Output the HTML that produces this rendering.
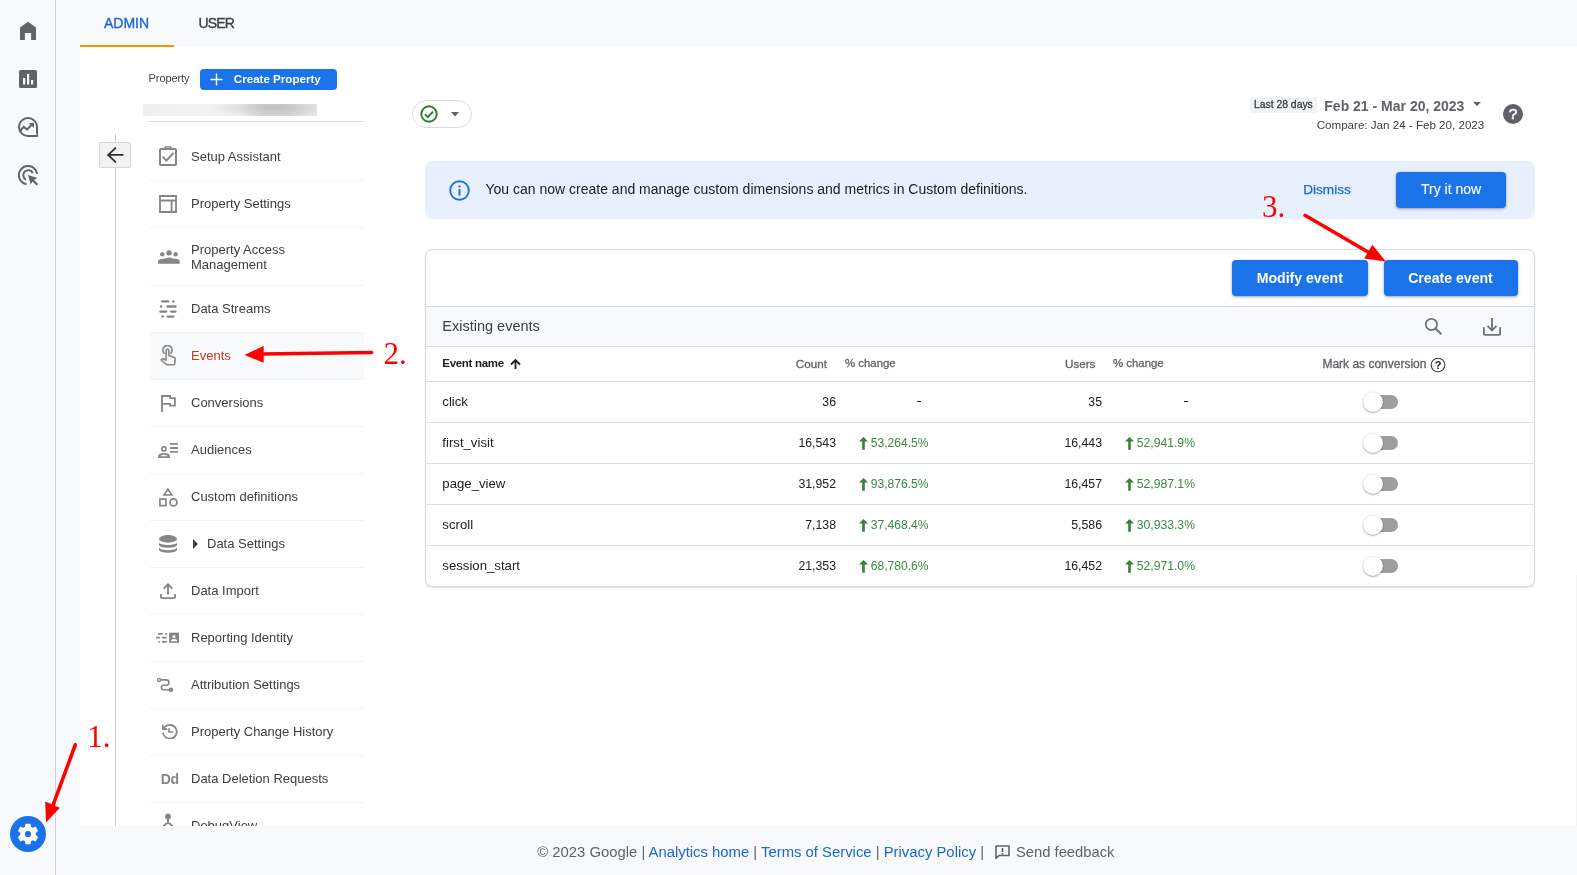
<!DOCTYPE html>
<html><head><meta charset="utf-8">
<style>
*{margin:0;padding:0;box-sizing:border-box}
html,body{width:1577px;height:875px;overflow:hidden;background:#f8f9fa;font-family:"Liberation Sans",sans-serif;color:#3c4043}
.a{position:absolute;display:block}
.t{position:absolute;white-space:nowrap;line-height:1}
body{-webkit-font-smoothing:antialiased}
</style></head><body><div style="position:absolute;left:0;top:0;width:1577px;height:875px;overflow:hidden;will-change:transform">
<div class="a" style="left:55px;top:0;width:1px;height:875px;background:#d3d3d3"></div>
<svg class="a" style="left:20px;top:21px;" width="16" height="19" viewBox="0 0 16 19"><path d="M8 0.7 L16 6.6 V19 H11.1 V12.1 H4.9 V19 H0 V6.6 Z" fill="#5f6368"/></svg>
<svg class="a" style="left:19px;top:70px;" width="18" height="18" viewBox="0 0 18 18"><rect x="0" y="0" width="18" height="18" rx="1.5" fill="#5f6368"/><rect x="4" y="8" width="2.2" height="6.5" fill="#f8f9fa"/><rect x="8" y="4" width="2.2" height="10.5" fill="#f8f9fa"/><rect x="12" y="10" width="2.2" height="4.5" fill="#f8f9fa"/></svg>
<svg class="a" style="left:18px;top:117px;" width="20" height="20" viewBox="0 0 20 20"><path d="M19 19 H10 A9 9 0 1 1 19 10 Z" fill="none" stroke="#5f6368" stroke-width="2" stroke-linejoin="round"/><path d="M2.3 13.9 L5.7 9.9 L9.1 12.5 L13.8 7.8" fill="none" stroke="#5f6368" stroke-width="2"/><path d="M10.9 5.9 H16 V11 Z" fill="#5f6368"/><circle cx="17.7" cy="17.1" r="0.9" fill="#f8f9fa"/></svg>
<svg class="a" style="left:18px;top:165px;" width="21" height="21" viewBox="0 0 21 21"><path d="M8.5 19.2 A9.2 9.2 0 1 1 19.2 9" fill="none" stroke="#5f6368" stroke-width="2"/><path d="M8 14.6 A5 5 0 1 1 14.8 8" fill="none" stroke="#5f6368" stroke-width="2"/><path d="M10 10 L19.5 13 L16 15 L20 19 L18.5 20.5 L14.5 16.5 L12.7 19.5 Z" fill="#5f6368"/></svg>
<svg class="a" style="left:10px;top:816px;" width="36" height="36" viewBox="0 0 36 36"><circle cx="18" cy="18" r="18" fill="#1a73e8"/><g transform="translate(5.1,5.1) scale(1.075)"><path fill="#fff" d="M19.14 12.94c.04-.3.06-.61.06-.94 0-.32-.02-.64-.07-.94l2.03-1.58a.49.49 0 0 0 .12-.61l-1.92-3.32a.488.488 0 0 0-.59-.22l-2.39.96c-.5-.38-1.03-.7-1.62-.94l-.36-2.54a.484.484 0 0 0-.48-.41h-3.84c-.24 0-.43.17-.47.41l-.36 2.54c-.59.24-1.13.57-1.62.94l-2.39-.96c-.22-.08-.47 0-.59.22L2.74 8.87c-.12.21-.08.47.12.61l2.03 1.58c-.05.3-.09.63-.09.94s.02.64.07.94l-2.03 1.58a.49.49 0 0 0-.12.61l1.92 3.32c.12.22.37.29.59.22l2.39-.96c.5.38 1.03.7 1.62.94l.36 2.54c.05.24.24.41.48.41h3.84c.24 0 .44-.17.47-.41l.36-2.54c.59-.24 1.13-.56 1.62-.94l2.39.96c.22.08.47 0 .59-.22l1.92-3.32c.12-.22.07-.47-.12-.61l-2.01-1.58zM12 15.6c-1.98 0-3.6-1.62-3.6-3.6s1.62-3.6 3.6-3.6 3.6 1.62 3.6 3.6-1.62 3.6-3.6 3.6z"/><circle cx="12" cy="12" r="4.2" fill="#fff"/><circle cx="12" cy="12" r="2.9" fill="#1a73e8"/></g></svg>
<div class="t" style="left:104px;top:16.35px;font-size:14px;color:#1967d2;font-weight:normal;font-family:'Liberation Sans',sans-serif;-webkit-text-stroke:0.35px #1967d2">ADMIN</div>
<div class="t" style="left:198.6px;top:16.35px;font-size:14px;color:#3c4043;font-weight:normal;font-family:'Liberation Sans',sans-serif;letter-spacing:-0.9px;-webkit-text-stroke:0.35px #3c4043">USER</div>
<div class="a" style="left:80px;top:45px;width:94px;height:2px;background:#f29900"></div>
<div class="a" style="left:80px;top:47px;width:1497px;height:779px;background:#fff;overflow:hidden">
<div class="t" style="left:68.6px;top:25.89px;font-size:11px;color:#3c4043;font-weight:normal;font-family:'Liberation Sans',sans-serif;letter-spacing:-0.1px">Property</div>
<div class="a" style="left:120px;top:22px;width:137px;height:21px;background:#1a73e8;border-radius:4px"></div>
<svg class="a" style="left:130px;top:26px;" width="13" height="13" viewBox="0 0 13 13"><path d="M6.5 0.5 V12.5 M0.5 6.5 H12.5" stroke="#fff" stroke-width="1.4"/></svg>
<div class="t" style="left:153.8px;top:26.38px;font-size:11.6px;color:#fff;font-weight:bold;font-family:'Liberation Sans',sans-serif;letter-spacing:0px">Create Property</div>
<div class="a" style="left:63px;top:57px;width:174px;height:12px;background:radial-gradient(ellipse 60px 9px at 73% 30%,rgba(0,0,0,.10),rgba(0,0,0,0) 100%),linear-gradient(90deg,#efefef 0%,#f3f3f3 35%,#ececec 55%,#d6d6d6 70%,#d4d4d4 82%,#e6e6e6 100%)"></div>
<div class="a" style="left:68px;top:74px;width:216px;height:1px;background:#dadce0"></div>
<div class="a" style="left:35px;top:87px;width:1px;height:700px;background:#cccccc"></div>
<div class="a" style="left:19px;top:95px;width:32px;height:26px;background:#f2f2f2;border:1px solid #d6d6d6;border-radius:2px"></div>
<svg class="a" style="left:24px;top:99px;" width="21" height="18" viewBox="0 0 21 18"><path d="M18.8 8.9 H4 M11.4 2.1 L4.2 8.9 L11.4 15.9" fill="none" stroke="#303030" stroke-width="1.9" stroke-linecap="round"/></svg>
<div class="a" style="left:70px;top:87px;width:214px;height:46px;"></div>
<div class="a" style="left:70px;top:133px;width:214px;height:1px;background:#f1f3f4"></div>
<div class="t" style="left:111px;top:102.70px;font-size:13px;color:#3c4043;font-weight:normal;font-family:'Liberation Sans',sans-serif;">Setup Assistant</div>
<svg class="a" style="left:79px;top:99px;" width="18" height="20" viewBox="0 0 18 20"><rect x="1" y="3" width="16" height="16" rx="1" fill="none" stroke="#868686" stroke-width="2"/><path d="M6 3 A3 2.6 0 0 1 12 3" fill="none" stroke="#868686" stroke-width="1.6"/><path d="M3.6 10.6 L7.4 14.6 L14.4 7" fill="none" stroke="#868686" stroke-width="2"/></svg>
<div class="a" style="left:70px;top:134px;width:214px;height:46px;"></div>
<div class="a" style="left:70px;top:180px;width:214px;height:1px;background:#f1f3f4"></div>
<div class="t" style="left:111px;top:149.70px;font-size:13px;color:#3c4043;font-weight:normal;font-family:'Liberation Sans',sans-serif;">Property Settings</div>
<svg class="a" style="left:79px;top:148px;" width="18" height="18" viewBox="0 0 18 18"><path d="M1 1 H17 V17 H1 Z M1 5.5 H17 M12.6 5.5 V17" fill="none" stroke="#868686" stroke-width="1.8"/></svg>
<div class="a" style="left:70px;top:181px;width:214px;height:57px;"></div>
<div class="a" style="left:70px;top:238px;width:214px;height:1px;background:#f1f3f4"></div>
<div class="a" style="left:111px;top:195px;font-size:13px;line-height:15.2px;color:#3c4043;white-space:nowrap">Property Access<br>Management</div>
<svg class="a" style="left:78px;top:203px;" width="22" height="14" viewBox="0 0 22 14"><circle cx="11" cy="2.9" r="2.7" fill="#868686"/><circle cx="4.3" cy="4.3" r="2.2" fill="#868686"/><circle cx="17.6" cy="4.3" r="2.2" fill="#868686"/><path d="M0.1 13.7 V10.8 Q0.3 9.2 3 8.9 Q6 8.7 7.5 8.6 Q11 6.6 14.5 8.6 Q16 8.7 19 8.9 Q21.5 9.2 21.7 10.8 V13.7 Z" fill="#868686"/></svg>
<div class="a" style="left:70px;top:239px;width:214px;height:46px;"></div>
<div class="a" style="left:70px;top:285px;width:214px;height:1px;background:#f1f3f4"></div>
<div class="t" style="left:111px;top:254.70px;font-size:13px;color:#3c4043;font-weight:normal;font-family:'Liberation Sans',sans-serif;">Data Streams</div>
<svg class="a" style="left:79px;top:253px;" width="19" height="19" viewBox="0 0 19 19"><g stroke="#868686" stroke-width="2.3" stroke-linecap="round"><path d="M3.2 1.4 H9.2 M8.4 6.5 H16.6 M1.3 11.6 H7.3 M12.1 11.6 H16.6 M8.7 16.6 H14.4"/></g><g fill="#868686"><circle cx="14.3" cy="1.4" r="1.25"/><circle cx="2.1" cy="6.5" r="1.25"/><circle cx="3.6" cy="16.6" r="1.25"/></g></svg>
<div class="a" style="left:70px;top:286px;width:214px;height:46px;background:#f8f9fa;"></div>
<div class="a" style="left:70px;top:332px;width:214px;height:1px;background:#f1f3f4"></div>
<div class="t" style="left:111px;top:301.70px;font-size:13px;color:#c5391f;font-weight:normal;font-family:'Liberation Sans',sans-serif;">Events</div>
<svg class="a" style="left:80px;top:298px;" width="17" height="21" viewBox="0 0 17 21"><path d="M4.6 8.6 A4.6 4.6 0 1 1 10.4 8.6" fill="none" stroke="#868686" stroke-width="1.6"/><path d="M6.1 15.2 V5.6 A1.4 1.4 0 0 1 8.9 5.6 V10.4 L14.3 12.6 Q15.4 13 15.3 14.1 L14.7 18.9 Q14.6 19.7 13.8 19.7 H6.7 L1.1 15 L2.7 13.5 Z" fill="none" stroke="#868686" stroke-width="1.6" stroke-linejoin="round"/></svg>
<div class="a" style="left:70px;top:333px;width:214px;height:46px;"></div>
<div class="a" style="left:70px;top:379px;width:214px;height:1px;background:#f1f3f4"></div>
<div class="t" style="left:111px;top:348.70px;font-size:13px;color:#3c4043;font-weight:normal;font-family:'Liberation Sans',sans-serif;">Conversions</div>
<svg class="a" style="left:81px;top:348px;" width="16" height="17" viewBox="0 0 16 17"><path d="M1 17 V1 H9 V3.1 H13.9 V10.7 H9 V8.9 H1" fill="none" stroke="#868686" stroke-width="1.8"/></svg>
<div class="a" style="left:70px;top:380px;width:214px;height:46px;"></div>
<div class="a" style="left:70px;top:426px;width:214px;height:1px;background:#f1f3f4"></div>
<div class="t" style="left:111px;top:395.70px;font-size:13px;color:#3c4043;font-weight:normal;font-family:'Liberation Sans',sans-serif;">Audiences</div>
<svg class="a" style="left:78px;top:395px;" width="20" height="16" viewBox="0 0 20 16"><circle cx="5.9" cy="6.9" r="2.05" fill="none" stroke="#868686" stroke-width="1.7"/><path fill-rule="evenodd" d="M0.1 15.9 V13.9 Q0.4 11 6 11 Q11.6 11 11.9 13.9 V15.9 Z M2.3 14.3 Q3 12.7 6 12.7 Q9 12.7 9.7 14.3 Z" fill="#868686"/><path d="M12.1 1.9 H19.9 M12.1 6 H19.9 M12.1 9.9 H19.9" stroke="#868686" stroke-width="1.9"/></svg>
<div class="a" style="left:70px;top:427px;width:214px;height:46px;"></div>
<div class="a" style="left:70px;top:473px;width:214px;height:1px;background:#f1f3f4"></div>
<div class="t" style="left:111px;top:442.70px;font-size:13px;color:#3c4043;font-weight:normal;font-family:'Liberation Sans',sans-serif;">Custom definitions</div>
<svg class="a" style="left:79px;top:440px;" width="19" height="20" viewBox="0 0 19 20"><path d="M8.95 2.2 L5.1 8 H12.8 Z" fill="none" stroke="#868686" stroke-width="1.7" stroke-linejoin="miter"/><rect x="0.95" y="12.05" width="6" height="6.6" fill="none" stroke="#868686" stroke-width="1.7"/><circle cx="14.5" cy="15.4" r="3.5" fill="none" stroke="#868686" stroke-width="1.7"/></svg>
<div class="a" style="left:70px;top:474px;width:214px;height:46px;"></div>
<div class="a" style="left:70px;top:520px;width:214px;height:1px;background:#f1f3f4"></div>
<div class="t" style="left:127px;top:489.70px;font-size:13px;color:#3c4043;font-weight:normal;font-family:'Liberation Sans',sans-serif;">Data Settings</div>
<svg class="a" style="left:112px;top:492px;" width="6" height="10" viewBox="0 0 6 10"><path d="M1 0 L6 5 L1 10 Z" fill="#3c4043"/></svg>
<svg class="a" style="left:79px;top:488px;" width="18" height="19" viewBox="0 0 18 19"><ellipse cx="9" cy="3.9" rx="9" ry="3.85" fill="#868686"/><path d="M0 7.4 A9 2.7 0 0 0 18 7.4 V10 A9 2.7 0 0 1 0 10 Z" fill="#868686"/><path d="M0 12.6 A9 2.7 0 0 0 18 12.6 V15 A9 2.7 0 0 1 0 15 Z" fill="#868686"/></svg>
<div class="a" style="left:70px;top:521px;width:214px;height:46px;"></div>
<div class="a" style="left:70px;top:567px;width:214px;height:1px;background:#f1f3f4"></div>
<div class="t" style="left:111px;top:536.70px;font-size:13px;color:#3c4043;font-weight:normal;font-family:'Liberation Sans',sans-serif;">Data Import</div>
<svg class="a" style="left:80px;top:536px;" width="16" height="16" viewBox="0 0 16 16"><path d="M8 1.2 V11.5 M3.6 5.6 L8 1.2 L12.4 5.6" fill="none" stroke="#868686" stroke-width="1.8"/><path d="M0.9 11 V14 Q0.9 15.1 2 15.1 H14 Q15.1 15.1 15.1 14 V11" fill="none" stroke="#868686" stroke-width="1.8"/></svg>
<div class="a" style="left:70px;top:568px;width:214px;height:46px;"></div>
<div class="a" style="left:70px;top:614px;width:214px;height:1px;background:#f1f3f4"></div>
<div class="t" style="left:111px;top:583.70px;font-size:13px;color:#3c4043;font-weight:normal;font-family:'Liberation Sans',sans-serif;">Reporting Identity</div>
<svg class="a" style="left:76px;top:585px;" width="23" height="12" viewBox="0 0 23 12"><g stroke="#868686" stroke-width="1.8"><path d="M2.2 1.8 H6.7 M9.2 1.8 H10.8 M0.1 5.7 H3.8 M5.9 5.7 H10.8 M2.2 9.8 H3.8 M5.9 9.8 H10.8"/></g><rect x="13.1" y="0.7" width="9.9" height="10.1" fill="#868686"/><circle cx="18" cy="4.5" r="1.6" fill="#fff"/><path d="M14.9 9.2 Q15 7 18 7 Q21 7 21.1 9.2 Z" fill="#fff"/></svg>
<div class="a" style="left:70px;top:615px;width:214px;height:46px;"></div>
<div class="a" style="left:70px;top:661px;width:214px;height:1px;background:#f1f3f4"></div>
<div class="t" style="left:111px;top:630.70px;font-size:13px;color:#3c4043;font-weight:normal;font-family:'Liberation Sans',sans-serif;">Attribution Settings</div>
<svg class="a" style="left:77px;top:630px;" width="17" height="16" viewBox="0 0 17 16"><circle cx="2" cy="2.9" r="1.55" fill="none" stroke="#868686" stroke-width="1.4"/><path d="M3.4 2.9 H9.3 A2.65 2.65 0 0 1 9.3 8.2 H6.6 A2.25 2.25 0 0 0 6.6 12.7 H13.9" fill="none" stroke="#868686" stroke-width="1.6"/><circle cx="13.9" cy="12.7" r="2.3" fill="#868686"/></svg>
<div class="a" style="left:70px;top:662px;width:214px;height:46px;"></div>
<div class="a" style="left:70px;top:708px;width:214px;height:1px;background:#f1f3f4"></div>
<div class="t" style="left:111px;top:677.70px;font-size:13px;color:#3c4043;font-weight:normal;font-family:'Liberation Sans',sans-serif;">Property Change History</div>
<svg class="a" style="left:82.30000000000001px;top:676.5px;" width="15.6" height="15.6" viewBox="120 -840 720 720"><path fill="#868686" d="M480-120q-138 0-240.5-91.5T122-440h82q14 104 92.5 172T480-200q117 0 198.5-81.5T760-480q0-117-81.5-198.5T480-760q-69 0-129 32t-101 88h110v80H120v-240h80v94q51-64 124.5-99T480-840q75 0 140.5 28.5t114 77q48.5 48.5 77 114T840-480q0 75-28.5 140.5t-77 114q-48.5 48.5-114 77T480-120Z"/><path d="M442 -640 V-470 H640" fill="none" stroke="#868686" stroke-width="75"/></svg>
<div class="a" style="left:70px;top:709px;width:214px;height:46px;"></div>
<div class="a" style="left:70px;top:755px;width:214px;height:1px;background:#f1f3f4"></div>
<div class="t" style="left:111px;top:724.70px;font-size:13px;color:#3c4043;font-weight:normal;font-family:'Liberation Sans',sans-serif;">Data Deletion Requests</div>
<div class="t" style="left:80.80000000000001px;top:725.15px;font-size:14px;color:#868686;font-weight:bold;font-family:'Liberation Sans',sans-serif;letter-spacing:-0.4px">Dd</div>
<div class="a" style="left:70px;top:756px;width:214px;height:46px;"></div>
<div class="a" style="left:70px;top:802px;width:214px;height:1px;background:#f1f3f4"></div>
<div class="t" style="left:111px;top:771.70px;font-size:13px;color:#3c4043;font-weight:normal;font-family:'Liberation Sans',sans-serif;">DebugView</div>
<svg class="a" style="left:83px;top:766px;" width="10" height="14" viewBox="0 0 10 14"><circle cx="5" cy="3.5" r="2.9" fill="#868686"/><path d="M5 5.5 V9" stroke="#868686" stroke-width="2"/><path d="M0.6 13.5 Q5 6.5 9.4 13.5" fill="none" stroke="#868686" stroke-width="2.2"/></svg>
<div class="a" style="left:332px;top:53px;width:60px;height:28px;border:1px solid #dadce0;border-radius:14px;background:#fff"></div>
<svg class="a" style="left:340px;top:58px;" width="18" height="18" viewBox="0 0 18 18"><circle cx="9" cy="9" r="7.7" fill="none" stroke="#2b7a2f" stroke-width="1.9"/><path d="M4.9 9.4 L7.7 12.1 L13.1 6.6" fill="none" stroke="#2b7a2f" stroke-width="2"/></svg>
<svg class="a" style="left:371px;top:65px;" width="8" height="5" viewBox="0 0 8 5"><path d="M0 0 H8 L4 4.5 Z" fill="#5f6368"/></svg>
<div class="a" style="left:1170px;top:50px;width:67px;height:16px;background:#f1f3f4"></div>
<div class="t" style="left:1173.9px;top:52.80px;font-size:10.4px;color:#3c4043;font-weight:normal;font-family:'Liberation Sans',sans-serif;-webkit-text-stroke:0.3px #3c4043">Last 28 days</div>
<div class="t" style="left:1244.3px;top:51.65px;font-size:14px;color:#5f6368;font-weight:bold;font-family:'Liberation Sans',sans-serif;">Feb 21 - Mar 20, 2023</div>
<svg class="a" style="left:1393px;top:55px;" width="8" height="4" viewBox="0 0 8 4"><path d="M0 0 H8 L4 4 Z" fill="#5f6368"/></svg>
<div class="t" style="left:1236.7px;top:71.58px;font-size:11.6px;color:#3c4043;font-weight:normal;font-family:'Liberation Sans',sans-serif;">Compare: Jan 24 - Feb 20, 2023</div>
<svg class="a" style="left:1423px;top:57px;" width="20" height="20" viewBox="0 0 20 20"><circle cx="10" cy="10" r="10" fill="#5f6368"/><text x="10" y="15.3" text-anchor="middle" font-family="Liberation Sans" font-size="15.5" fill="#fff" stroke="#fff" stroke-width="0.5">?</text></svg>
<div class="a" style="left:345px;top:114px;width:1110px;height:58px;background:#e8f0fe;border-radius:8px"></div>
<svg class="a" style="left:369px;top:133px;" width="21" height="21" viewBox="0 0 21 21"><circle cx="10.5" cy="10.5" r="9.3" fill="none" stroke="#1a73e8" stroke-width="1.9"/><rect x="9.5" y="9" width="2" height="6.5" fill="#1a73e8"/><rect x="9.5" y="5.5" width="2" height="2" fill="#1a73e8"/></svg>
<div class="t" style="left:405.5px;top:135.15px;font-size:14px;color:#202124;font-weight:normal;font-family:'Liberation Sans',sans-serif;">You can now create and manage custom dimensions and metrics in Custom definitions.</div>
<div class="t" style="left:1223.2px;top:136.29px;font-size:13.6px;color:#1967d2;font-weight:normal;font-family:'Liberation Sans',sans-serif;-webkit-text-stroke:0.25px #1967d2">Dismiss</div>
<div class="a" style="left:1316px;top:125px;width:110px;height:36px;background:#1a73e8;border-radius:4px;box-shadow:0 1px 2px rgba(60,64,67,.3),0 1px 3px 1px rgba(60,64,67,.15)"></div>
<div class="t" style="left:1341px;top:135.15px;font-size:14px;color:#fff;font-weight:normal;font-family:'Liberation Sans',sans-serif;-webkit-text-stroke:0.1px #fff">Try it now</div>
<div class="a" style="left:345px;top:202px;width:1110px;height:338px;border:1px solid #dadce0;border-radius:8px;background:#fff;box-shadow:0 1px 1.5px rgba(60,64,67,.18)"></div>
<div class="a" style="left:1152px;top:213px;width:136px;height:36px;background:#1a73e8;border-radius:4px;box-shadow:0 1px 2px rgba(60,64,67,.3),0 1px 3px 1px rgba(60,64,67,.15)"></div>
<div class="t" style="left:1176.7px;top:224.36px;font-size:14.1px;color:#fff;font-weight:bold;font-family:'Liberation Sans',sans-serif;">Modify event</div>
<div class="a" style="left:1304px;top:213px;width:134px;height:36px;background:#1a73e8;border-radius:4px;box-shadow:0 1px 2px rgba(60,64,67,.3),0 1px 3px 1px rgba(60,64,67,.15)"></div>
<div class="t" style="left:1328.2px;top:224.36px;font-size:14.1px;color:#fff;font-weight:bold;font-family:'Liberation Sans',sans-serif;">Create event</div>
<div class="a" style="left:346px;top:259px;width:1108px;height:1px;background:#dadce0"></div>
<div class="a" style="left:346px;top:260px;width:1108px;height:39px;background:#f8f9fa"></div>
<div class="a" style="left:346px;top:299px;width:1108px;height:1px;background:#dadce0"></div>
<div class="t" style="left:362.3px;top:271.93px;font-size:14.5px;color:#3c4043;font-weight:normal;font-family:'Liberation Sans',sans-serif;">Existing events</div>
<svg class="a" style="left:1344px;top:270px;" width="19" height="19" viewBox="0 0 19 19"><circle cx="7.4" cy="7.4" r="5.6" fill="none" stroke="#6f7173" stroke-width="1.75"/><path d="M11.3 11.3 L17.3 17.3" stroke="#6f7173" stroke-width="2"/></svg>
<svg class="a" style="left:1402px;top:270px;" width="20" height="20" viewBox="0 0 20 20"><path d="M10 1 V13 M5.5 8.9 L10 13.4 L14.5 8.9" fill="none" stroke="#6f7173" stroke-width="1.8"/><path d="M1.9 10.2 V16.8 Q1.9 17.8 2.9 17.8 H17.1 Q18.1 17.8 18.1 16.8 V10.2" fill="none" stroke="#6f7173" stroke-width="1.8"/></svg>
<div class="t" style="left:362.3px;top:311.27px;font-size:11.5px;color:#202124;font-weight:bold;font-family:'Liberation Sans',sans-serif;letter-spacing:-0.3px">Event name</div>
<svg class="a" style="left:430px;top:312px;" width="11" height="10" viewBox="0 0 11 10"><path d="M5.5 10 V1.5 M1 5.5 L5.5 1 L10 5.5" fill="none" stroke="#202124" stroke-width="1.8"/></svg>
<div class="t" style="left:715.8px;top:311.10px;font-size:11.7px;color:#5f6368;font-weight:normal;font-family:'Liberation Sans',sans-serif;-webkit-text-stroke:0.3px #5f6368">Count</div>
<div class="t" style="left:765px;top:311.35px;font-size:11.4px;color:#5f6368;font-weight:normal;font-family:'Liberation Sans',sans-serif;-webkit-text-stroke:0.3px #5f6368">% change</div>
<div class="t" style="left:985.0999999999999px;top:311.18px;font-size:11.6px;color:#5f6368;font-weight:normal;font-family:'Liberation Sans',sans-serif;-webkit-text-stroke:0.3px #5f6368">Users</div>
<div class="t" style="left:1033px;top:311.35px;font-size:11.4px;color:#5f6368;font-weight:normal;font-family:'Liberation Sans',sans-serif;-webkit-text-stroke:0.3px #5f6368">% change</div>
<div class="t" style="left:1242.4px;top:311.04px;font-size:12px;color:#5f6368;font-weight:normal;font-family:'Liberation Sans',sans-serif;-webkit-text-stroke:0.3px #5f6368">Mark as conversion</div>
<svg class="a" style="left:1349.5px;top:309.5px;" width="16" height="16" viewBox="0 0 16 16"><circle cx="8" cy="8" r="6.8" fill="none" stroke="#3c4043" stroke-width="1.1"/><text x="8" y="12" text-anchor="middle" font-family="Liberation Sans" font-weight="bold" font-size="11" fill="#202124">?</text></svg>
<div class="a" style="left:346px;top:334px;width:1108px;height:1px;background:#dadce0"></div>
<div class="t" style="left:362.3px;top:347.83px;font-size:13.2px;color:#202124;font-weight:normal;font-family:'Liberation Sans',sans-serif;">click</div>
<div class="t" style="right:741px;top:348.59px;font-size:12.3px;color:#202124;left:auto">36</div>
<div class="t" style="right:475px;top:348.59px;font-size:12.3px;color:#202124">35</div>
<div class="a" style="left:837px;top:354px;width:4px;height:1px;background:#202124"></div>
<div class="a" style="left:1104px;top:354px;width:4px;height:1px;background:#202124"></div>
<div class="a" style="left:1284px;top:348px;width:34px;height:14px;background:#9e9e9e;border-radius:7px"></div>
<div class="a" style="left:1283px;top:344.5px;width:20px;height:20px;background:#fff;border-radius:50%;box-shadow:0 1px 2px rgba(0,0,0,.3),0 0 1px rgba(0,0,0,.2)"></div>
<div class="a" style="left:346px;top:375px;width:1108px;height:1px;background:#dadce0"></div>
<div class="t" style="left:362.3px;top:388.83px;font-size:13.2px;color:#202124;font-weight:normal;font-family:'Liberation Sans',sans-serif;">first_visit</div>
<div class="t" style="right:741px;top:389.59px;font-size:12.3px;color:#202124;left:auto">16,543</div>
<div class="t" style="right:475px;top:389.59px;font-size:12.3px;color:#202124">16,443</div>
<svg class="a" style="left:779px;top:390px;" width="9" height="13" viewBox="0 0 9 13"><path d="M0 4.6 L4.5 0 L9 4.6 Z" fill="#3a7f3a"/><rect x="3.2" y="4" width="2.6" height="8.8" fill="#3a7f3a"/></svg>
<div class="t" style="left:790.7px;top:389.76px;font-size:12.1px;color:#3b8a3e;font-weight:normal;font-family:'Liberation Sans',sans-serif;">53,264.5%</div>
<svg class="a" style="left:1045.3px;top:390px;" width="9" height="13" viewBox="0 0 9 13"><path d="M0 4.6 L4.5 0 L9 4.6 Z" fill="#3a7f3a"/><rect x="3.2" y="4" width="2.6" height="8.8" fill="#3a7f3a"/></svg>
<div class="t" style="left:1056.7px;top:389.67px;font-size:12.2px;color:#3b8a3e;font-weight:normal;font-family:'Liberation Sans',sans-serif;">52,941.9%</div>
<div class="a" style="left:1284px;top:389px;width:34px;height:14px;background:#9e9e9e;border-radius:7px"></div>
<div class="a" style="left:1283px;top:385.5px;width:20px;height:20px;background:#fff;border-radius:50%;box-shadow:0 1px 2px rgba(0,0,0,.3),0 0 1px rgba(0,0,0,.2)"></div>
<div class="a" style="left:346px;top:416px;width:1108px;height:1px;background:#dadce0"></div>
<div class="t" style="left:362.3px;top:429.83px;font-size:13.2px;color:#202124;font-weight:normal;font-family:'Liberation Sans',sans-serif;">page_view</div>
<div class="t" style="right:741px;top:430.59px;font-size:12.3px;color:#202124;left:auto">31,952</div>
<div class="t" style="right:475px;top:430.59px;font-size:12.3px;color:#202124">16,457</div>
<svg class="a" style="left:779px;top:431px;" width="9" height="13" viewBox="0 0 9 13"><path d="M0 4.6 L4.5 0 L9 4.6 Z" fill="#3a7f3a"/><rect x="3.2" y="4" width="2.6" height="8.8" fill="#3a7f3a"/></svg>
<div class="t" style="left:790.7px;top:430.76px;font-size:12.1px;color:#3b8a3e;font-weight:normal;font-family:'Liberation Sans',sans-serif;">93,876.5%</div>
<svg class="a" style="left:1045.3px;top:431px;" width="9" height="13" viewBox="0 0 9 13"><path d="M0 4.6 L4.5 0 L9 4.6 Z" fill="#3a7f3a"/><rect x="3.2" y="4" width="2.6" height="8.8" fill="#3a7f3a"/></svg>
<div class="t" style="left:1056.7px;top:430.67px;font-size:12.2px;color:#3b8a3e;font-weight:normal;font-family:'Liberation Sans',sans-serif;">52,987.1%</div>
<div class="a" style="left:1284px;top:430px;width:34px;height:14px;background:#9e9e9e;border-radius:7px"></div>
<div class="a" style="left:1283px;top:426.5px;width:20px;height:20px;background:#fff;border-radius:50%;box-shadow:0 1px 2px rgba(0,0,0,.3),0 0 1px rgba(0,0,0,.2)"></div>
<div class="a" style="left:346px;top:457px;width:1108px;height:1px;background:#dadce0"></div>
<div class="t" style="left:362.3px;top:470.83px;font-size:13.2px;color:#202124;font-weight:normal;font-family:'Liberation Sans',sans-serif;">scroll</div>
<div class="t" style="right:741px;top:471.59px;font-size:12.3px;color:#202124;left:auto">7,138</div>
<div class="t" style="right:475px;top:471.59px;font-size:12.3px;color:#202124">5,586</div>
<svg class="a" style="left:779px;top:472px;" width="9" height="13" viewBox="0 0 9 13"><path d="M0 4.6 L4.5 0 L9 4.6 Z" fill="#3a7f3a"/><rect x="3.2" y="4" width="2.6" height="8.8" fill="#3a7f3a"/></svg>
<div class="t" style="left:790.7px;top:471.76px;font-size:12.1px;color:#3b8a3e;font-weight:normal;font-family:'Liberation Sans',sans-serif;">37,468.4%</div>
<svg class="a" style="left:1045.3px;top:472px;" width="9" height="13" viewBox="0 0 9 13"><path d="M0 4.6 L4.5 0 L9 4.6 Z" fill="#3a7f3a"/><rect x="3.2" y="4" width="2.6" height="8.8" fill="#3a7f3a"/></svg>
<div class="t" style="left:1056.7px;top:471.67px;font-size:12.2px;color:#3b8a3e;font-weight:normal;font-family:'Liberation Sans',sans-serif;">30,933.3%</div>
<div class="a" style="left:1284px;top:471px;width:34px;height:14px;background:#9e9e9e;border-radius:7px"></div>
<div class="a" style="left:1283px;top:467.5px;width:20px;height:20px;background:#fff;border-radius:50%;box-shadow:0 1px 2px rgba(0,0,0,.3),0 0 1px rgba(0,0,0,.2)"></div>
<div class="a" style="left:346px;top:498px;width:1108px;height:1px;background:#dadce0"></div>
<div class="t" style="left:362.3px;top:511.83px;font-size:13.2px;color:#202124;font-weight:normal;font-family:'Liberation Sans',sans-serif;">session_start</div>
<div class="t" style="right:741px;top:512.59px;font-size:12.3px;color:#202124;left:auto">21,353</div>
<div class="t" style="right:475px;top:512.59px;font-size:12.3px;color:#202124">16,452</div>
<svg class="a" style="left:779px;top:513px;" width="9" height="13" viewBox="0 0 9 13"><path d="M0 4.6 L4.5 0 L9 4.6 Z" fill="#3a7f3a"/><rect x="3.2" y="4" width="2.6" height="8.8" fill="#3a7f3a"/></svg>
<div class="t" style="left:790.7px;top:512.76px;font-size:12.1px;color:#3b8a3e;font-weight:normal;font-family:'Liberation Sans',sans-serif;">68,780.6%</div>
<svg class="a" style="left:1045.3px;top:513px;" width="9" height="13" viewBox="0 0 9 13"><path d="M0 4.6 L4.5 0 L9 4.6 Z" fill="#3a7f3a"/><rect x="3.2" y="4" width="2.6" height="8.8" fill="#3a7f3a"/></svg>
<div class="t" style="left:1056.7px;top:512.67px;font-size:12.2px;color:#3b8a3e;font-weight:normal;font-family:'Liberation Sans',sans-serif;">52,971.0%</div>
<div class="a" style="left:1284px;top:512px;width:34px;height:14px;background:#9e9e9e;border-radius:7px"></div>
<div class="a" style="left:1283px;top:508.5px;width:20px;height:20px;background:#fff;border-radius:50%;box-shadow:0 1px 2px rgba(0,0,0,.3),0 0 1px rgba(0,0,0,.2)"></div>
<div class="a" style="left:346px;top:539px;width:1108px;height:1px;background:#dadce0"></div>
</div>
<div class="a" style="left:1576px;top:575px;width:1px;height:251px;background:#f3f3f3"></div>
<div class="t" style="left:537.2px;top:844.93px;font-size:14.85px;color:#5f6368;font-weight:normal;font-family:'Liberation Sans',sans-serif;">© 2023 Google | <span style="color:#1967d2">Analytics home</span> | <span style="color:#1967d2">Terms of Service</span> | <span style="color:#1967d2">Privacy Policy</span> |</div>
<svg class="a" style="left:995px;top:845px;" width="15" height="14" viewBox="0 0 15 14"><path d="M1 1 H14 V10.5 H4 L1 13.5 Z" fill="none" stroke="#5f6368" stroke-width="1.6" stroke-linejoin="round"/><rect x="6.7" y="3" width="1.6" height="4" fill="#5f6368"/><rect x="6.7" y="8" width="1.6" height="1.5" fill="#5f6368"/></svg>
<div class="t" style="left:1016px;top:844.51px;font-size:14.75px;color:#5f6368;font-weight:normal;font-family:'Liberation Sans',sans-serif;">Send feedback</div>
<div class="t" style="left:87.2px;top:721.26px;font-size:31px;color:#ff0000;font-weight:normal;font-family:'Liberation Serif',serif;">1.</div>
<div class="t" style="left:383.6px;top:338.36px;font-size:31px;color:#ff0000;font-weight:normal;font-family:'Liberation Serif',serif;">2.</div>
<div class="t" style="left:1261.9px;top:190.66px;font-size:31px;color:#ff0000;font-weight:normal;font-family:'Liberation Serif',serif;">3.</div>
<svg class="a" style="left:0;top:0" width="1577" height="875">
<g fill="#ff0000" stroke="#ff0000">
<path d="M75.3 744.8 L52 808" stroke-width="3.6" stroke-linecap="round" fill="none"/>
<path d="M45.2 801.5 L59.9 807.7 L46 822.4 Z" stroke="none"/>
<path d="M371.6 352.5 L262 354" stroke-width="3.6" stroke-linecap="round" fill="none"/>
<path d="M244.5 354.9 L263.7 345.9 L263.7 362.8 Z" stroke="none"/>
<path d="M1305 215.3 L1368 252" stroke-width="3.6" stroke-linecap="round" fill="none"/>
<path d="M1372.4 244.7 L1364.2 258.6 L1385.8 261.6 Z" stroke="none"/>
</g></svg>
</div></body></html>
